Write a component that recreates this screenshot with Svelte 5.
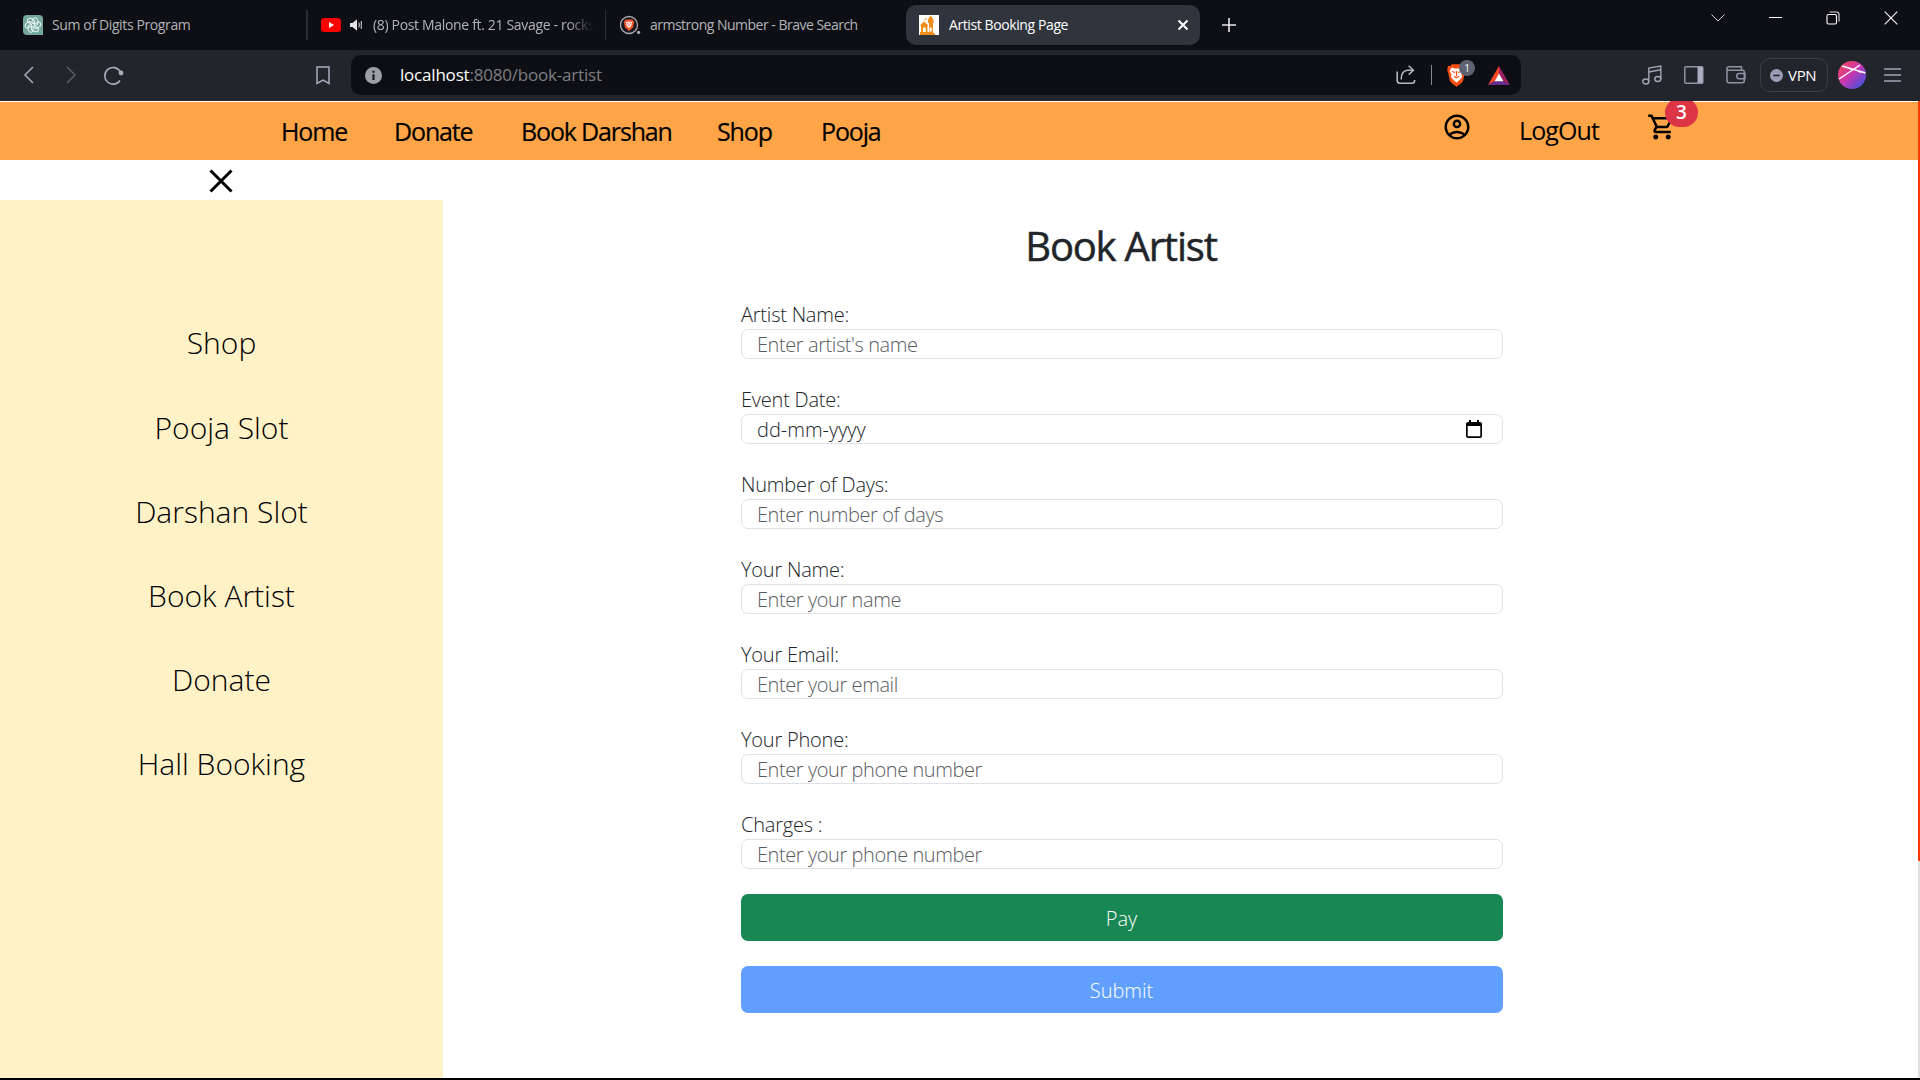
<script>
  const links = ['Home', 'Donate', 'Book Darshan', 'Shop', 'Pooja'];
  const side = ['Shop', 'Pooja Slot', 'Darshan Slot', 'Book Artist', 'Donate', 'Hall Booking'];
  const fields = [
    { label: 'Artist Name:', hint: "Enter artist's name" },
    { label: 'Event Date:', date: 'dd-mm-yyyy' },
    { label: 'Number of Days:', hint: 'Enter number of days' },
    { label: 'Your Name:', hint: 'Enter your name' },
    { label: 'Your Email:', hint: 'Enter your email' },
    { label: 'Your Phone:', hint: 'Enter your phone number' },
    { label: 'Charges :', hint: 'Enter your phone number' }
  ];
  const petals = [0, 60, 120, 180, 240, 300];
</script>

<div class="window">
  <header class="tabs">
    <div class="tab t1">
      <svg width="20" height="20" viewBox="0 0 20 20">
        <path d="M4 0H16Q20 0 20 4V20H4Q0 20 0 16V4Q0 0 4 0Z" fill="#74a89b" />
        {#each petals as a}
          <path d="M10 7.4V4.6Q10.2 2.8 12 2.7Q14.6 2.8 14.8 5.4V9.2L10.2 11.6" transform="rotate({a} 10 10)" fill="none" stroke="#eaf6f2" stroke-width="1" />
        {/each}
      </svg>
      <span class="grow g1">Sum of Digits Program</span>
    </div>
    <div class="tab t2">
      <svg width="20" height="14" viewBox="0 0 20 14"><rect width="20" height="14" rx="3.5" fill="#f00" /><path d="M8 4L13 7L8 10Z" fill="#fff" /></svg>
      <svg class="speaker" width="13" height="12" viewBox="0 0 13 12"><path d="M0 4H2.5L7 .3V11.7L2.5 8H0Z" fill="#e4e4e6" /><path d="M8.8 3.6Q10 6 8.8 8.4M11.3 2V10" fill="none" stroke="#bbb" stroke-width="1.2" /></svg>
      <span class="grow fade g2">(8) Post Malone ft. 21 Savage - rocks</span>
    </div>
    <div class="tab t3">
      <svg width="21" height="20" viewBox="0 0 21 20"><circle cx="9" cy="10" r="8.5" fill="#17181d" stroke="#a9abb0" stroke-width="1.3" /><path d="M5.5 4.6H12.5L14.3 7L13 12.5L9 16L5 12.5L3.8 7Z" fill="#f0502b" /><path d="M5.6 6.8H12.4L11.2 11L9 13.2L6.8 11Z" fill="#ffe4dc" /><path d="M7 8L8.3 9M11 8L9.7 9M9 9.6V11" stroke="#f0502b" stroke-width=".8" /><circle cx="18.6" cy="17.4" r="1.6" fill="#a9abb0" /></svg>
      <span class="g3">armstrong Number - Brave Search</span>
    </div>
    <div class="tab active">
      <svg width="20" height="20" viewBox="0 0 20 20"><rect width="20" height="20" fill="#fff" /><path d="M1 20V17H2V11L1 10.5L5 6.5L9 10L8.500 11V17H10V8L8.700 7.500Q9 3 11.500 .5Q14.400 3 14.800 7.500L14 8V18H16V20Z" fill="#ef8e1c" /><path d="M4 17V13.200Q5.400 11.400 6.800 13.200V17ZM10.500 16.500V13Q11.500 11.500 12.700 13V16.500Z" fill="#fff" /><path d="M5 6L7 3.500M6 3L8 5" stroke="#f4ae5d" stroke-width="1" /></svg>
      <span class="grow g4">Artist Booking Page</span>
      <svg width="12" height="12" viewBox="0 0 12 12"><path d="M1.5 1.5L10.5 10.5M10.5 1.5L1.5 10.5" stroke="#fff" stroke-width="2" /></svg>
    </div>
    <svg class="plus" width="14" height="14" viewBox="0 0 14 14"><path d="M7 0V14M0 7H14" stroke="#e8e8ea" stroke-width="1.6" /></svg>
    <div class="controls">
      <svg width="14" height="14" viewBox="0 0 14 14"><path d="M.5 3.5L7 10L13.5 3.5" fill="none" stroke="#cfcfd1" /></svg>
      <svg width="13" height="14" viewBox="0 0 13 14"><path d="M0 6.500H13" stroke="#fff" /></svg>
      <svg width="14" height="14" viewBox="0 0 14 14"><rect x="1" y="3.500" width="9.500" height="9.500" rx="1.500" fill="none" stroke="#fff" stroke-width="1.1" /><path d="M3.500 1H10.500Q13 1 13 3.500V10.500" fill="none" stroke="#ddd" stroke-width="1.1" /></svg>
      <svg width="14" height="14" viewBox="0 0 14 14"><path d="M.7 .7L13.300 13.300M13.300 .7L.7 13.300" stroke="#f2f2f2" stroke-width="1.2" /></svg>
    </div>
  </header>

  <div class="toolbar">
    <svg class="back" width="11" height="18" viewBox="0 0 11 18"><path d="M10 1L2 9L10 17" fill="none" stroke="#a7acbd" stroke-width="1.5" /></svg>
    <svg class="fwd" width="11" height="18" viewBox="0 0 11 18"><path d="M1 1L9 9L1 17" fill="none" stroke="#595d67" stroke-width="1.5" /></svg>
    <svg class="reload" width="20" height="20" viewBox="0 0 20 20"><path d="M16 15.500A8.300 8.300 0 1 1 16.200 6.500" fill="none" stroke="#a7acbd" stroke-width="1.6" /><circle cx="17" cy="8" r="2.4" fill="#a7acbd" /></svg>
    <svg class="mark" width="14" height="19" viewBox="0 0 14 19"><path d="M1 1H13V17.500L7 14L1 17.500Z" fill="none" stroke="#a7acbd" stroke-width="1.5" /></svg>
    <div class="url">
      <svg width="17" height="17" viewBox="0 0 17 17"><circle cx="8.5" cy="8.5" r="8.5" fill="#9aa0a6" /><path d="M8.5 7.3V13M8.5 3.8V5.8" stroke="#0e0f14" stroke-width="2" /></svg>
      <span class="address"><b>localhost</b>:8080/book-artist</span>
      <svg width="20" height="20" viewBox="0 0 20 20"><path d="M1.2 6.5V15.6Q1.2 18.3 4 18.3H16Q18.6 18.3 18.6 15.6V15" fill="none" stroke="#b5b7bd" stroke-width="1.6" /><path d="M5.2 14.5Q5.2 5.2 12 5.2H17M12.7 .8L17.4 5.2L12.7 9.6" fill="none" stroke="#b5b7bd" stroke-width="1.5" /></svg>
      <i class="bar"></i>
      <div class="shield">
        <svg width="19" height="23" viewBox="0 0 19 23"><path d="M5 .3H14L16 2.3L18 2L18.8 6L17.8 9L16 17Q15 19 9.5 22.8Q4 19 3 17L1.2 9L.2 6L1 2L3 2.3Z" fill="#fb5011" /><path d="M4.5 3.5L7.5 4.5H11.5L14.5 3.5L16.2 7L14.6 10.5L15 13L12.6 16L9.5 18.5L6.4 16L4 13L4.4 10.5L2.8 7Z" fill="#fff" /><path d="M5 7.5L8 8.5M14 7.5L11 8.5M9.5 7V12M7 12.2L9.5 13.7L12 12.2" fill="none" stroke="#fb5011" stroke-width="1.3" /></svg>
        <span>1</span>
      </div>
      <svg class="bat" width="22" height="19" viewBox="0 0 22 19"><path d="M11 0L0 19L6.8 15L11 7.8Z" fill="#ff4724" /><path d="M0 19H22L15.2 15H6.8Z" fill="#662d91" /><path d="M11 0L22 19L15.2 15L11 7.8Z" fill="#9e1f63" /><path d="M11 7.5L15.4 15.2H6.6Z" fill="#fff" /></svg>
    </div>
    <svg class="music" width="20" height="20" viewBox="0 0 20 20"><g fill="none" stroke="#a0a6b5" stroke-width="1.4"><ellipse cx="3.8" cy="16.5" rx="3" ry="2.5" /><ellipse cx="15.8" cy="14" rx="3" ry="2.5" /><path d="M6.8 16.5V3L18.8 1V14M6.8 7L18.8 4.8" /></g></svg>
    <svg class="panel" width="20" height="18" viewBox="0 0 20 18"><rect x=".8" y=".8" width="18" height="16.4" rx="1" fill="none" stroke="#8d93a2" stroke-width="1.5" /><path d="M13.5 1H18.8V17H13.5Z" fill="#a9afc0" /></svg>
    <svg class="wallet" width="20" height="18" viewBox="0 0 20 18"><g fill="none" stroke="#8d93a2" stroke-width="1.5"><path d="M17.5 4.2H3Q1 4.2 1 2.5Q1 .8 3 .8H15.5V4M1 2.5V14.5Q1 16.7 3 16.7H16.3Q18.3 16.7 18.3 14.8V6Q18.3 4.2 16.5 4.2" /><path d="M19 7.5H13Q10.7 7.5 10.7 10T13 12.8H19Z" /></g></svg>
    <div class="vpn">
      <svg width="13" height="13" viewBox="0 0 13 13"><circle cx="6.5" cy="6.5" r="6.5" fill="#9a9db5" /><path d="M3.3 6.5H9.7" stroke="#22252c" stroke-width="1.6" /></svg>
      <span>VPN</span>
    </div>
    <svg class="avatar" width="28" height="28" viewBox="0 0 28 28">
      <defs><linearGradient id="av" x1="0" y1="0" x2="1" y2="1"><stop offset=".1" stop-color="#f2435f" /><stop offset=".48" stop-color="#c837b0" /><stop offset=".9" stop-color="#4353e0" /></linearGradient></defs>
      <circle cx="14" cy="14" r="14" fill="url(#av)" /><path d="M4 5L27.500 12M1 18L22 4M12 8Q18 8 23 11.500" fill="none" stroke="#fff" stroke-width="1.5" />
    </svg>
    <svg class="menu" width="17" height="14" viewBox="0 0 17 14"><path d="M0 1H17M0 7H17M0 13H17" stroke="#a0a5b2" stroke-width="1.5" /></svg>
  </div>

  <div class="page">
    <div class="content">
      <nav>
        <ul>{#each links as l}<li>{l}</li>{/each}</ul>
        <svg class="user" width="30" height="30" viewBox="0 0 24 24"><path d="M12 2C6.480 2 2 6.480 2 12s4.480 10 10 10 10-4.480 10-10S17.520 2 12 2zM7.350 18.500C8.660 17.560 10.260 17 12 17s3.340.560 4.650 1.500C15.340 19.440 13.740 20 12 20s-3.340-.560-4.650-1.500zm10.790-1.380C16.450 15.800 14.320 15 12 15s-4.450.800-6.140 2.120C4.700 15.730 4 13.950 4 12c0-4.420 3.580-8 8-8s8 3.580 8 8c0 1.950-.700 3.730-1.860 5.120zM12 6c-1.930 0-3.500 1.570-3.500 3.500S10.070 13 12 13s3.500-1.570 3.500-3.500S13.930 6 12 6zm0 5c-.830 0-1.500-.670-1.500-1.500S11.170 8 12 8s1.500.670 1.500 1.500S12.830 11 12 11z" /></svg>
        <span class="logout">LogOut</span>
        <div class="cart">
          <svg width="30" height="30" viewBox="0 0 24 24"><path d="M15.550 13c.750 0 1.410-.410 1.750-1.030l3.580-6.490A.996.996 0 0 0 20.010 4H5.210l-.940-2H1v2h2l3.600 7.590-1.350 2.440C4.520 15.370 5.480 17 7 17h12v-2H7l1.100-2h7.450zM6.160 6h12.150l-2.760 5H8.530L6.160 6zM7 18c-1.100 0-1.990.900-1.990 2S5.900 22 7 22s2-.900 2-2-.900-2-2-2zm10 0c-1.100 0-1.990.900-1.990 2s.890 2 1.990 2 2-.900 2-2-.900-2-2-2z" /></svg>
          <span>3</span>
        </div>
      </nav>
      <div class="body">
        <aside>
          <div class="close"><svg width="24" height="24" viewBox="0 0 24 24"><path d="M1.500 1.500L22.500 22.500M22.500 1.500L1.500 22.500" stroke="#000" stroke-width="3" /></svg></div>
          <ul>{#each side as s}<li>{s}</li>{/each}</ul>
        </aside>
        <main>
          <h1>Book Artist</h1>
          <form>
            {#each fields as f}
              <label>
                <span>{f.label}</span>
                {#if f.date}
                  <div class="input">{f.date}
                    <svg width="16" height="18" viewBox="0 0 16 18"><path d="M2 2H3V0H5V2H11V0H13V2H14Q16 2 16 4V16Q16 18 14 18H2Q0 18 0 16V4Q0 2 2 2ZM1.700 6V16.300H14.300V6Z" fill-rule="evenodd" /></svg>
                  </div>
                {:else}
                  <input class="input" placeholder={f.hint} />
                {/if}
              </label>
            {/each}
            <button type="button" class="pay">Pay</button>
            <button type="button" class="submit">Submit</button>
          </form>
        </main>
      </div>
    </div>
    <div class="scroll"><i></i></div>
  </div>
</div>

<style>
  :global(body) { background: #000; overflow: hidden; }
  .window { width: 1920px; height: 1080px; display: flex; flex-direction: column; background: #000; font-family: "Open Sans", "Noto Sans", sans-serif; }
  svg { display: block; flex: none; }
  ul { list-style: none; margin: 0; padding: 0; }
  .tabs { height: 50px; display: flex; align-items: center; background: #0e0f14; color: #b3b4b8; font-size: 14px; flex: none; }
  .tab { display: flex; align-items: center; height: 30px; box-sizing: border-box; white-space: nowrap; }
  .tab span { padding-bottom: 1px; }
  .grow { flex: 1; overflow: hidden; }
  .t1 { width: 308px; padding-left: 23px; gap: 9px; border-right: 2px solid #2b2c31; }
  .t2 { width: 298px; padding: 0 5px 0 13px; gap: 9px; border-right: 1px solid #2b2c31; }
  .speaker { margin-right: 1px; }
  .t3 { width: 300px; padding-left: 14px; gap: 9px; }
  .fade { mask-image: linear-gradient(90deg, #000 195px, transparent 220px); }
  .active { width: 294px; height: 40px; border-radius: 10px; background: #30343d; padding: 0 11px 0 13px; gap: 10px; color: #fff; }
  .g1 { letter-spacing: -0.38px; }
  .g2 { letter-spacing: -0.33px; }
  .g3 { letter-spacing: -0.51px; }
  .g4 { letter-spacing: -0.4px; }
  .plus { margin-left: 22px; }
  .controls { display: flex; margin: 0 22px 14px auto; gap: 44px; }
  .toolbar { height: 51px; box-sizing: border-box; padding-bottom: 1px; display: flex; align-items: center; background: #22252c; flex: none; }
  .back { margin-left: 23px; }
  .fwd { margin-left: 32px; }
  .reload { margin-left: 27px; }
  .mark { margin-left: 192px; }
  .url { margin-left: 21px; width: 1170px; height: 40px; border-radius: 10px; background: #0e0f14; display: flex; align-items: center; box-sizing: border-box; padding: 0 11px 0 14px; }
  .address { margin-left: 18px; flex: 1; color: #7d7f83; font-size: 17px; letter-spacing: -0.2px; padding-bottom: 1px; }
  .address b { color: #fff; font-weight: 400; }
  .bar { width: 1px; height: 20px; background: #85878d; margin: 0 15px; }
  .shield { position: relative; }
  .shield span { position: absolute; left: 12px; top: -4px; width: 16px; height: 16px; border-radius: 50%; background: #5f6270; color: #fff; font-size: 10px; line-height: 16px; text-align: center; }
  .bat { margin-left: 22px; }
  .music { margin-left: 121px; }
  .panel { margin-left: 22px; }
  .wallet { margin-left: 22px; }
  .vpn { margin-left: 14px; width: 68px; height: 34px; box-sizing: border-box; border: 1px solid #3a3e49; border-radius: 10px; display: flex; align-items: center; gap: 5px; padding-left: 9px; color: #fff; font-size: 15px; letter-spacing: -0.3px; }
  .avatar { margin-left: 10px; }
  .menu { margin-left: 18px; }
  .page { display: flex; height: 977px; background: #fff; }
  .content { width: 1918px; padding-top: 1px; box-sizing: border-box; display: flex; flex-direction: column; }
  .scroll { width: 2px; background: #e0e0e0; }
  .scroll i { display: block; height: 760px; background: #ff3a00; }
  nav { height: 58px; flex: none; background: #ffa547; display: flex; font-size: 25px; line-height: 58px; color: #000; padding-left: 281px; letter-spacing: -1.150px; -webkit-text-stroke: .2px #000; }
  nav ul { display: grid; grid-template-columns: 65px 79px 148px 56px 58px; gap: 48px; white-space: nowrap; }
  .user { margin: 10px 0 0 563px; }
  .logout { margin: -1px 0 0 47px; width: 80px; letter-spacing: -0.9px; -webkit-text-stroke: 0; }
  .cart { position: relative; margin: 10px 0 0 48px; height: 30px; }
  .cart span { position: absolute; left: 18px; top: -14px; width: 33px; height: 29px; border-radius: 15px; background: #dc3545; color: #fff; font-size: 19px; font-weight: 600; line-height: 29px; text-align: center; letter-spacing: 0; -webkit-text-stroke: 0; clip-path: inset(3px 0 0 0); }
  .body { display: flex; flex: 1; }
  aside { width: 443px; display: flex; flex-direction: column; }
  .close { height: 40px; display: flex; align-items: center; justify-content: center; padding: 2px 1px 0 0; box-sizing: border-box; }
  aside ul { flex: 1; background: #fff2c7; padding-top: 101.400px; text-align: center; font-size: 30px; font-weight: 300; color: #000; }
  aside li { height: 84.200px; line-height: 84px; }
  main { flex: 1; padding: 56px 0 0 298px; color: #212529; }
  h1 { margin: 0; width: 760px; height: 60px; line-height: 60px; font-size: 40px; font-weight: 400; text-align: center; letter-spacing: -1.200px; -webkit-text-stroke: .5px #212529; }
  form { width: 762px; padding-top: 24px; display: flex; flex-direction: column; font-size: 20px; font-weight: 300; }
  label { height: 85px; }
  label span { display: block; height: 29px; line-height: 30px; letter-spacing: -0.220px; }
  .input { display: flex; align-items: center; justify-content: space-between; width: 100%; height: 30px; box-sizing: border-box; border: 1px solid #dee2e6; border-radius: 7px; padding: 0 20px 0 15px; font: inherit; color: inherit; background: #fff; }
  .input::placeholder { color: #595c5f; opacity: 1; letter-spacing: -0.420px; }
  button { height: 47px; border: 0; border-radius: 7px; color: #fff; font: inherit; margin-bottom: 25px; padding: 2px 1px 0 0; }
  .pay { background: #198754; margin-top: -1px; }
  .submit { background: #619fff; }
</style>
